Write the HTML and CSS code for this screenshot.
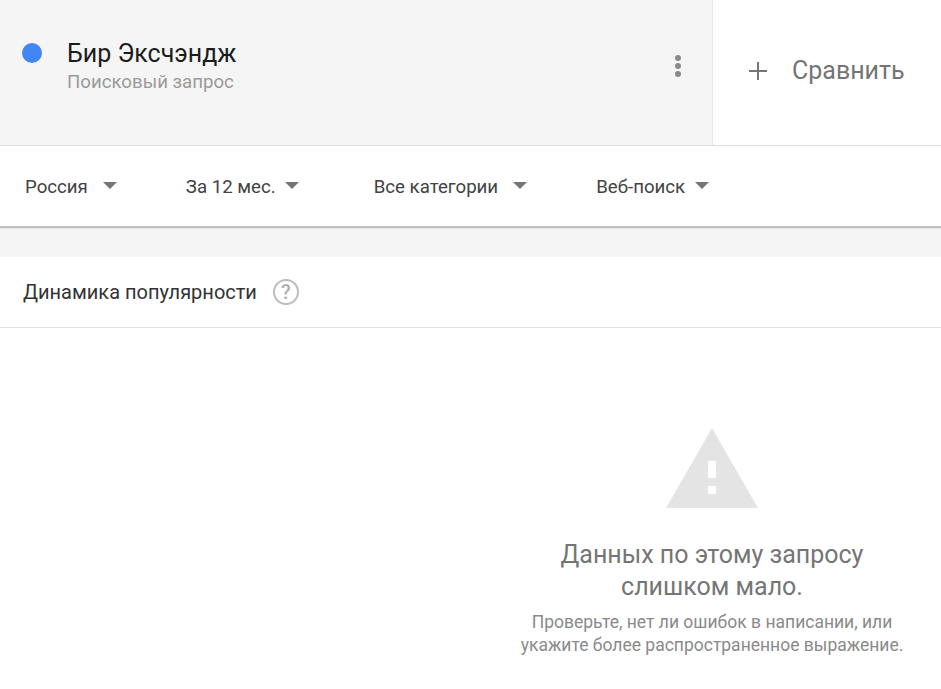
FILE: index.html
```html
<!DOCTYPE html>
<html lang="en">
<head>
    <meta charset="UTF-8">
    <meta name="viewport" content="width=device-width, initial-scale=1.0">
    <title>Динамика популярности</title>
    <link rel="stylesheet" href="styles.css">
</head>
<body>
    <div class="header">
        <div class="term">
            <span class="dot"></span>
            <div class="term-text">
                <div class="term-name">Бир Эксчэндж</div>
                <div class="term-type">Поисковый запрос</div>
            </div>
            <div class="more"><span></span><span></span><span></span></div>
        </div>
        <div class="compare">
            <svg class="plus" width="18" height="18" viewBox="0 0 18 18"><path d="M9 0v18M0 9h18" stroke="#757575" stroke-width="2" fill="none"/></svg>
            <span>Сравнить</span>
        </div>
    </div>

    <div class="filters">
        <div class="filter filter-country">Россия<span class="arrow"></span></div>
        <div class="filter filter-time">За 12 мес.<span class="arrow"></span></div>
        <div class="filter filter-category">Все категории<span class="arrow"></span></div>
        <div class="filter filter-search">Веб-поиск<span class="arrow"></span></div>
    </div>

    <div class="strip"></div>

    <div class="section-title">
        <h2>Динамика популярности</h2>
        <span class="help">?</span>
    </div>

    <div class="empty">
        <svg class="warning" width="92" height="80" viewBox="0 0 92 80">
            <path fill-rule="evenodd" fill="#e4e4e4" d="M46 0L92 80H0ZM42 33v17h8V33ZM42 58v8h8v-8Z"/>
        </svg>
        <div class="empty-title">Данных по этому запросу<br>слишком мало.</div>
        <div class="empty-text">Проверьте, нет ли ошибок в написании, или<br>укажите более распространенное выражение.</div>
    </div>
</body>
</html>
```

FILE: styles.css
```css
html, body {
    height: 100%;
}

body {
    margin: 0;
    overflow: hidden;
    background-color: white;
    font-family: Roboto, 'Liberation Sans', sans-serif;
}

.header {
    display: flex;
    height: 145px;
    border-bottom: 1px solid #e0e0e0;
}

.term {
    display: flex;
    align-items: flex-start;
    width: 713px;
    padding: 43px 0 0 21.500px;
    box-sizing: border-box;
    background-color: #f5f5f5;
    border-right: 1px solid #e9e9e9;
}

.dot {
    width: 20px;
    height: 20px;
    margin-right: 25.500px;
    border-radius: 50%;
    background-color: #4285f4;
}

.term-text {
    flex: 1;
    margin-top: -3px;
}

.term-name {
    font-size: 25px;
    line-height: 28px;
    color: #1c1c1c;
}

.term-type {
    margin-top: 2px;
    font-size: 18.67px;
    line-height: 24px;
    color: #9a9a9a;
}

.more {
    display: flex;
    flex-direction: column;
    gap: 2px;
    margin: 12px 31px 0 0;
}

.more span {
    width: 6px;
    height: 6px;
    border-radius: 50%;
    background-color: #8a8a8a;
}

.compare {
    display: flex;
    align-items: center;
    flex: 1;
    padding: 0 0 4px 36px;
    font-size: 25px;
    color: #757575;
}

.plus {
    margin-right: 25px;
}

.filters {
    display: flex;
    align-items: center;
    height: 79px;
    padding: 1px 0 0 25px;
    border-bottom: 2px solid #bfbfbf;
    font-size: 18.67px;
    color: #424242;
}

.filter {
    display: flex;
    align-items: center;
}

.arrow {
    width: 0;
    height: 0;
    margin-top: -3px;
    border-left: 7px solid transparent;
    border-right: 7px solid transparent;
    border-top: 7px solid #757575;
}

.filter-country .arrow, .filter-category .arrow {
    margin-left: 15px;
}

.filter-time .arrow {
    margin-left: 9px;
}

.filter-search .arrow {
    margin-left: 10px;
}

.filter-country {
    margin-right: 69px;
}

.filter-time {
    margin-right: 75px;
}

.filter-category {
    margin-right: 69px;
}

.strip {
    height: 29px;
    box-sizing: border-box;
    border-top: 1px solid #e6e6e6;
    background-color: #f5f5f5;
}

.section-title {
    display: flex;
    align-items: center;
    height: 70px;
    padding-left: 23px;
    border-bottom: 1px solid #e0e0e0;
}

h2 {
    margin: 0 16px 0 0;
    font-size: 20px;
    font-weight: 400;
    color: #333333;
}

.help {
    width: 22px;
    height: 22px;
    border: 2px solid #bdbdbd;
    border-radius: 50%;
    font-size: 20px;
    font-weight: 500;
    line-height: 22px;
    text-align: center;
    color: #b0b0b0;
}

.empty {
    width: 440px;
    margin: 100px 0 0 492px;
    text-align: center;
}

.warning {
    display: block;
    margin: 0 auto 31px;
}

.empty-title {
    font-size: 25px;
    line-height: 32px;
    color: #757575;
}

.empty-text {
    margin-top: 8px;
    font-size: 17.500px;
    line-height: 23px;
    color: #8a8a8a;
}
```
